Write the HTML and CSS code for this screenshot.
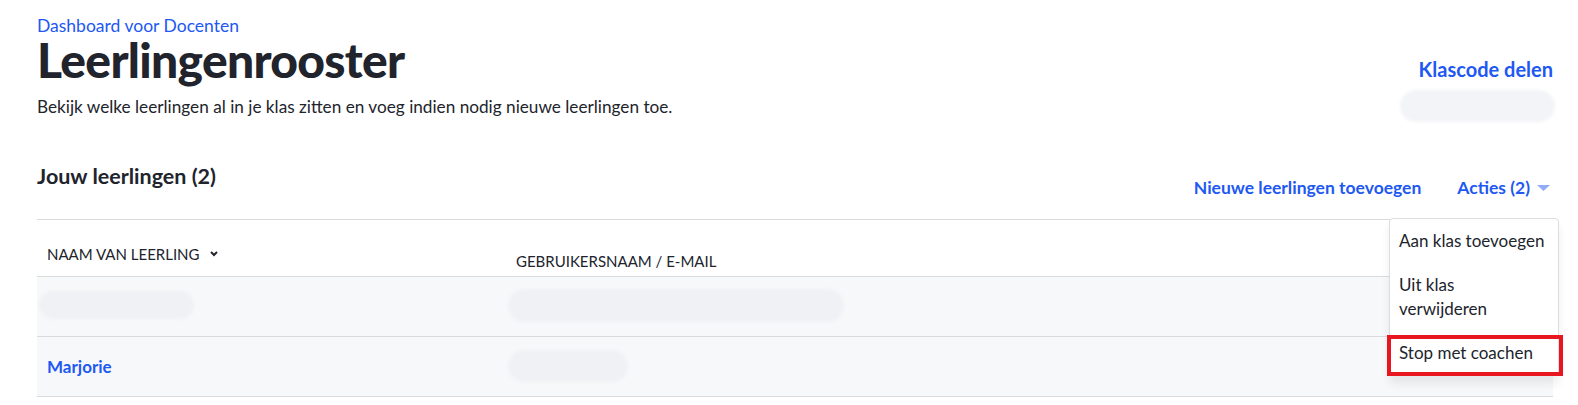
FILE: index.html
```html
<!DOCTYPE html>
<html lang="nl">
<head>
    <meta charset="UTF-8">
    <meta name="viewport" content="width=device-width, initial-scale=1.0">
    <title>Leerlingenrooster</title>
    <link rel="stylesheet" href="styles.css">
</head>
<body>
    <div class="page">
        <header class="page-header">
            <div class="intro">
                <a href="#" class="breadcrumb">Dashboard voor Docenten</a>
                <h1>Leerlingenrooster</h1>
                <p class="intro-text">Bekijk welke leerlingen al in je klas zitten en voeg indien nodig nieuwe leerlingen toe.</p>
            </div>
            <div class="class-code">
                <a href="#" class="share-link">Klascode delen</a>
                <span class="blurred code-pill"></span>
            </div>
        </header>

        <section class="students">
            <div class="students-bar">
                <h2>Jouw leerlingen (2)</h2>
                <div class="students-actions">
                    <a href="#" class="action-link">Nieuwe leerlingen toevoegen</a>
                    <div class="actions-menu">
                        <a href="#" class="action-link actions-toggle">Acties (2)
                            <svg class="caret" width="16" height="6" viewBox="0 0 16 6"><path d="M0 0 L13 0 L6.5 6 Z"/></svg>
                        </a>
                        <ul class="dropdown">
                            <li class="dropdown-item">Aan klas toevoegen</li>
                            <li class="dropdown-item wrap">Uit klas verwijderen</li>
                            <li class="dropdown-item highlighted">Stop met coachen</li>
                        </ul>
                    </div>
                </div>
            </div>

            <div class="roster">
                <div class="roster-head">
                    <div class="head-cell sort-cell">NAAM VAN LEERLING
                        <svg class="chevron" width="8" height="6" viewBox="0 0 8 6"><path d="M1 1 L4 4 L7 1"/></svg>
                    </div>
                    <div class="head-cell email-cell">GEBRUIKERSNAAM / E-MAIL</div>
                </div>
                <div class="roster-row">
                    <div class="cell"><span class="blurred name-pill"></span></div>
                    <div class="cell"><span class="blurred email-pill wide"></span></div>
                </div>
                <div class="roster-row">
                    <div class="cell"><a href="#" class="student-name">Marjorie</a></div>
                    <div class="cell"><span class="blurred email-pill short"></span></div>
                </div>
            </div>
        </section>
    </div>
</body>
</html>
```

FILE: styles.css
```css
* {
    box-sizing: border-box;
    margin: 0;
    padding: 0;
}
body {
    font-family: Lato, "Noto Sans", sans-serif;
    background-color: #fff;
    color: #21242c;
}
a {
    text-decoration: none;
    color: #2158f2;
}
.page {
    padding: 16px 25px 0 37px;
}
.page-header {
    display: flex;
    justify-content: space-between;
}
.breadcrumb {
    display: block;
    font-size: 17.5px;
    line-height: 20px;
}
h1 {
    font-size: 48px;
    line-height: 48px;
    font-weight: 900;
    letter-spacing: -0.7px;
}
.intro-text {
    margin-top: 11px;
    font-size: 17.2px;
    line-height: 24px;
}
.class-code {
    display: flex;
    flex-direction: column;
    align-items: flex-end;
    padding-top: 41px;
}
.share-link {
    font-size: 20px;
    line-height: 24px;
    font-weight: 700;
}
.blurred {
    display: block;
    background-color: #f3f4f7;
    border-radius: 16px;
    filter: blur(1.5px);
}
.code-pill {
    width: 155px;
    height: 32px;
    margin-top: 9px;
    margin-right: -2px;
}
.students {
    margin-top: 42px;
}
.students-bar {
    display: flex;
    justify-content: space-between;
    align-items: flex-start;
}
h2 {
    font-size: 21.5px;
    line-height: 24px;
    font-weight: 700;
}
.students-actions {
    display: flex;
    gap: 36px;
    margin-top: 12px;
}
.action-link {
    font-size: 17.5px;
    line-height: 24px;
    font-weight: 700;
}
.actions-menu {
    position: relative;
}
.actions-toggle {
    display: flex;
    align-items: center;
}
.caret {
    margin-left: 7px;
    fill: rgba(33, 88, 242, 0.5);
}
.dropdown {
    position: absolute;
    top: calc(100% + 18px);
    right: -6px;
    width: 170px;
    list-style: none;
    background-color: #fff;
    border: 1px solid #dcdde0;
    border-radius: 4px;
    box-shadow: 0 8px 8px rgba(33, 36, 44, 0.08);
    z-index: 10;
}
.dropdown-item {
    position: relative;
    padding: 10px 20px 10px 9px;
    font-size: 17px;
    line-height: 24px;
    color: #21242c;
    white-space: nowrap;
}
.dropdown-item.wrap {
    white-space: normal;
}
.dropdown-item.highlighted::after {
    content: "";
    position: absolute;
    top: 4px;
    left: -3px;
    right: -5px;
    bottom: -1px;
    border: 4px solid #e8161f;
}
.roster {
    margin-top: 19px;
    border-top: 1px solid #dadbdd;
}
.roster-head,
.roster-row {
    display: grid;
    grid-template-columns: 469px 1fr;
    border-bottom: 1px solid #dadbdd;
}
.roster-head {
    height: 57px;
    align-items: end;
}
.head-cell {
    padding: 0 10px 5px;
    font-size: 15px;
    line-height: 20px;
    color: #21242c;
}
.sort-cell {
    display: flex;
    align-items: center;
    padding-bottom: 12px;
}
.chevron {
    margin-left: 10px;
    fill: none;
    stroke: #21242c;
    stroke-width: 2;
}
.roster-row {
    height: 60px;
    align-items: center;
    background-color: #f7f8fa;
}
.cell {
    padding: 0 10px;
}
.roster-row .blurred {
    background-color: #f0f1f4;
    margin-left: -8px;
}
.name-pill {
    width: 155px;
    height: 28px;
    margin-top: -4px;
}
.email-pill.wide {
    width: 336px;
    height: 33px;
    margin-top: -3px;
}
.email-pill.short {
    width: 120px;
    height: 32px;
    margin-top: -1px;
}
.student-name {
    font-size: 17px;
    line-height: 20px;
    font-weight: 700;
}
```
